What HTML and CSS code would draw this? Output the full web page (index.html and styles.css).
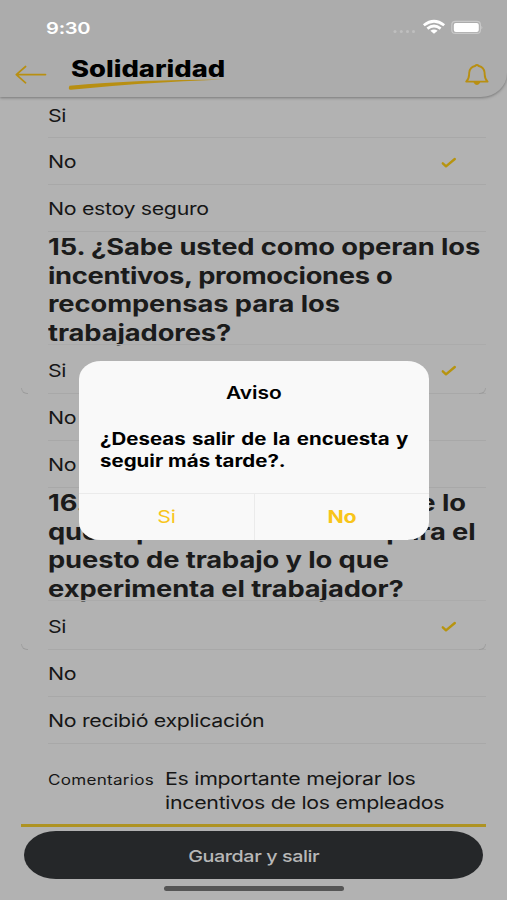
FILE: index.html
```html
<!DOCTYPE html>
<html lang="es">
<head>
<meta charset="utf-8">
<title>Solidaridad</title>
<link rel="stylesheet" href="styles.css">
</head>
<body>
<div class="screen">
  <header class="header">
    <div class="status">
      <span class="time wide">9:30</span>
      <svg class="status-icons" width="92" height="18" viewBox="0 0 92 18">
        <g fill="#bfbfbf"><circle cx="4" cy="13.500" r="1.500"/><circle cx="10.300" cy="13.500" r="1.500"/><circle cx="16.500" cy="13.500" r="1.500"/><circle cx="22.500" cy="13.500" r="1.500"/></g>
        <g fill="none" stroke="#fff" stroke-width="2.700"><path d="M32.800 7.300Q43 -.8 53.200 7.300"/><path d="M36.400 10.600Q43 5.400 49.600 10.600"/></g>
        <path d="M39.400 12.700Q43 10.200 46.600 12.700L43 15.800Z" fill="#fff"/>
        <rect x="60.800" y="3.400" width="28.600" height="12" rx="3.500" fill="none" stroke="#c9c9c9" stroke-width="1.200"/>
        <rect x="62.800" y="5" width="25" height="9" rx="2" fill="#fff"/>
        <path d="M90.400 7.700q1.900 1.800 0 3.600z" fill="#c9c9c9"/>
      </svg>
    </div>
    <div class="bar">
      <svg class="back" width="32" height="20" viewBox="0 0 32 20" fill="none" stroke="#b88f12" stroke-width="1.700" stroke-linecap="round" stroke-linejoin="round"><path d="M30.500 9.600H1.300M10.600 1.500L1.300 9.600L10.600 17.800"/></svg>
      <div class="brand">
        <h1 class="wide">Solidaridad</h1>
        <svg class="swoosh" width="158" height="12" viewBox="0 0 158 12"><path d="M1.500 6.800Q70 .7 155 .6Q75 3.600 3 10.800Q-.5 11 1.500 6.800Z" fill="#b88f12"/></svg>
      </div>
      <svg class="bell" width="26" height="24" viewBox="0 0 26 24" fill="none" stroke="#b88f12" stroke-width="1.900" stroke-linejoin="round"><path d="M2.200 18.600C5.500 15.500 5 13 5.200 9.800C5.500 6 8.300 3.700 11 3Q12.900 1 14.800 3C17.500 3.700 20.300 6 20.600 9.800C20.800 13 20.300 15.500 23.600 18.600Z"/><path d="M10.600 19.500Q12.900 22.500 15.200 19.500Z" fill="#b88f12"/></svg>
    </div>
  </header>

  <main class="survey">
    <div class="row first"><span class="wide">Si</span></div>
    <div class="row"><span class="wide">No</span><svg class="check" width="16" height="12" viewBox="0 0 16 12"><path d="M1.800 6.300L5 9.300L13.800 2" /></svg></div>
    <div class="row"><span class="wide">No estoy seguro</span></div>
    <h2 class="question">
      <span class="wide">15. ¿Sabe usted como operan los</span>
      <span class="wide tight">incentivos, promociones o</span>
      <span class="wide">recompensas para los</span>
      <span class="wide">trabajadores?</span>
    </h2>
    <div class="row card"><span class="wide">Si</span><svg class="check" width="16" height="12" viewBox="0 0 16 12"><path d="M1.800 6.300L5 9.300L13.800 2" /></svg></div>
    <div class="row"><span class="wide">No</span></div>
    <div class="row"><span class="wide">No estoy seguro</span></div>
    <h2 class="question">
      <span class="wide spread a"><span>16. ¿Hay relación</span><span>entre lo</span></span>
      <span class="wide spread b"><span>que explicaron</span><span>para el</span></span>
      <span class="wide">puesto de trabajo y lo que</span>
      <span class="wide">experimenta el trabajador?</span>
    </h2>
    <div class="row card"><span class="wide">Si</span><svg class="check" width="16" height="12" viewBox="0 0 16 12"><path d="M1.800 6.300L5 9.300L13.800 2" /></svg></div>
    <div class="row"><span class="wide">No</span></div>
    <div class="row"><span class="wide">No recibió explicación</span></div>
    <div class="comments">
      <div class="label"><span class="wide">Comentarios</span></div>
      <div class="answer">
        <span class="wide">Es importante mejorar los</span>
        <span class="wide">incentivos de los empleados</span>
      </div>
    </div>
  </main>

  <footer class="footer">
    <button class="save"><span class="wide">Guardar y salir</span></button>
    <div class="home"></div>
  </footer>

  <div class="dialog">
    <div class="dialog-title"><span class="wide">Aviso</span></div>
    <div class="dialog-text">
      <span class="wide l1">¿Deseas salir de la encuesta y</span>
      <span class="wide">seguir más tarde?.</span>
    </div>
    <div class="actions">
      <div class="action"><span class="wide">Si</span></div>
      <div class="action strong"><span class="wide">No</span></div>
    </div>
  </div>
</div>
</body>
</html>
```
FILE: styles.css
```css
* { box-sizing: border-box; }
body { margin: 0; font-family: Inter, "Liberation Sans", sans-serif; color: #161616; }
.screen { position: relative; width: 507px; height: 900px; overflow: hidden; background: #b2b2b2; display: flex; flex-direction: column; }
.wide { display: block; width: max-content; white-space: nowrap; transform: scaleX(1.22); transform-origin: left center; }

.header { height: 97px; flex: none; background: #acacac; border-bottom-right-radius: 26px 24px; box-shadow: 0 1px 3px #777; padding-top: 18px; }
.status { display: flex; justify-content: space-between; align-items: center; height: 18px; padding: 0 24px 0 46px; }
.time { color: #fff; font-size: 16.500px; font-weight: 600; line-height: 18px; padding-top: 1px; letter-spacing: -.2px; }
.bar { display: flex; align-items: flex-start; padding: 21px 17px 0 15px; }
.back { margin-top: 8px; }
.brand { margin-left: 21px; flex: 1; }
h1 { margin: 0 0 0 3px; color: #000; font-size: 22.400px; line-height: 24px; font-weight: 800; }
.swoosh { display: block; margin-top: -2px; }
.bell { margin-top: 6px; }

.survey { flex: 1; padding: 0 21px; }
.row { display: flex; align-items: center; justify-content: space-between; height: 47px; margin-left: 27px; padding: 2px 30px 0 0; border-bottom: 1px solid #a8a8a8; font-size: 17.500px; line-height: 22px; letter-spacing: -.27px; }
.row.first { height: 41px; padding-bottom: 10px; align-items: flex-end; }
.check { fill: none; stroke: #b7940f; stroke-width: 2.400; stroke-linecap: round; stroke-linejoin: round; margin: 1px -1px 0 0; }
.question { margin: 0 0 0 27px; padding-top: 1px; font-size: 22.400px; font-weight: 700; line-height: 28.700px; letter-spacing: -.08px; color: #1b1b1b; height: 113px; }
.tight { letter-spacing: -.25px; }
.spread { display: flex; justify-content: space-between; }
.a { width: 342.500px; }
.b { width: 350.500px; }
.card { position: relative; height: 49px; padding-top: 3px; box-shadow: 0 -1px #ababab; }
.card::before, .card::after { content: ""; position: absolute; bottom: -1px; width: 6px; height: 5px; border-bottom: 1px solid #9c9c9c; }
.card::before { left: -27px; border-left: 1px solid #a0a0a0; border-bottom-left-radius: 6px; }
.card::after { right: 0; border-right: 1px solid #a0a0a0; border-bottom-right-radius: 6px; }
.comments { display: flex; height: 83px; padding: 23px 0 0 27px; border-bottom: 3px solid #ae9323; }
.label { width: 117px; font-size: 14px; line-height: 26px; letter-spacing: .22px; }
.answer { font-size: 17.500px; line-height: 23.500px; letter-spacing: -.23px; }

.footer { height: 69px; padding: 0 24px; }
.save { display: flex; align-items: center; justify-content: center; width: 459px; height: 48px; padding: 1px 0 0 1px; border: 0; border-radius: 32px / 24px; background: #252729; color: #b7b7b7; font: 500 16.200px Inter, sans-serif; letter-spacing: -.35px; }
.save .wide, .dialog-title .wide, .action .wide { transform-origin: center; }
.home { width: 180px; height: 5px; margin: 7px 0 0 140px; border-radius: 3px; background: #555; }

.dialog { position: absolute; left: 79px; top: 361px; width: 350px; height: 179px; border-radius: 22px / 18px; background: #f9f9f9; color: #000; overflow: hidden; }
.dialog-title { display: flex; justify-content: center; padding-top: 21px; font-size: 17.200px; line-height: 22px; font-weight: 600; }
.dialog-text { margin: 25px 0 0 21px; font-size: 16.800px; line-height: 21.500px; font-weight: 700; height: 64px; }
.l1 { word-spacing: 1.300px; }
.actions { display: flex; height: 47px; border-top: 1px solid #ebebeb; }
.action { flex: 1; display: flex; align-items: center; justify-content: center; color: #f8c51a; font-size: 17.500px; letter-spacing: -.2px; padding-bottom: 1px; }
.strong { border-left: 1px solid #ebebeb; font-weight: 700; }
```
